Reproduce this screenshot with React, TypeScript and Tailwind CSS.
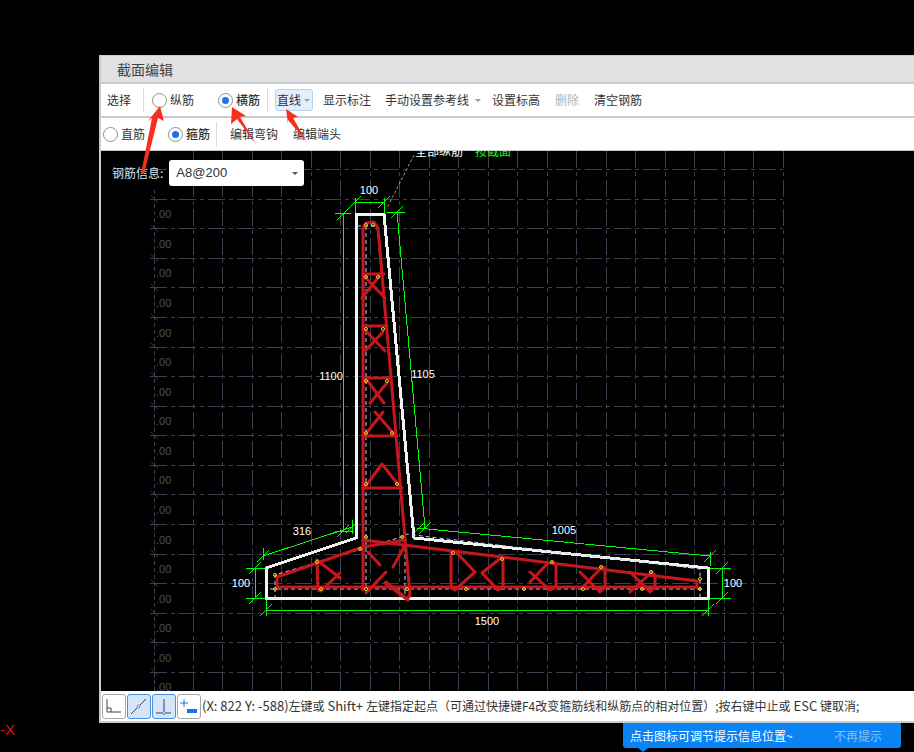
import React from 'react';

const FONT = "font-['Microsoft_YaHei','Noto_Sans_CJK_SC','Noto_Sans',sans-serif]";

// 网格线
const gridX = Array.from({ length: 21 }, (_, i) => 193 + i * 29.5);
const gridY = Array.from({ length: 18 }, (_, i) => 169.7 + i * 29.57);

// 钢筋线
const rebar: string[] = [
  '363,590 363,228 366,223 374,222 378,228 406,550 410,595 407,599 386,582',
  '363,274 384,274', '363,326 387,326', '363,378 390,378', '363,436 397,436', '363,488 402,488',
  '363,275 385,298', '362,298 380,275', '365,330 385,351', '365,351 383,332',
  '367,380 384,403', '370,403 387,383', '365,435 383,412', '375,412 395,435',
  '365,487 382,464 400,487',
  '277,587 277,577 363,547 405,540', '363,540 697,581 697,587 277,587',
  '317,560 318,590 321,591 340,573', '317,560 340,578',
  '368,552 380,565', '367,592 386,572', '393,567 405,545', '385,583 408,600',
  '451,553 451,588 455,590 475,572 457,553',
  '503,557 503,587 498,590 482,573 502,557', '475,572 455,590',
  '530,582 548,563', '530,572 550,590 556,587 556,565 552,562',
  '580,572 600,592 605,587 605,568 601,567', '582,588 602,567',
  '630,572 650,592 655,587 655,575 651,572', '630,592 652,572',
];

// 纵筋点
const dots: [number, number][] = [
  [366, 225], [373, 225], [366, 277], [378, 277], [366, 329], [383, 329], [366, 381], [387, 381],
  [366, 433], [392, 433], [366, 484], [397, 484], [366, 537], [402, 537], [360, 549],
  [275, 575], [275, 589], [317, 562], [321, 589], [366, 589], [407, 589], [453, 553], [466, 589],
  [502, 559], [524, 589], [552, 562], [583, 589], [601, 567], [642, 589], [651, 572], [700, 579], [700, 589],
];

// 标注线
const dims: string[] = [
  '355,202 384,202', '355,198 355,213', '384,198 384,213',
  '335,213 351,213', '343.5,213 343.5,531', '335,531 354,531',
  '387,212 405,212', '397,212 425,528', '417,528 710,556',
  '263,556 352,527', '255,568 255,598', '246,568 266,568', '246,598 266,598',
  '266,610 708,610', '266,598 266,616', '708,598 708,616',
  '722,568 722,598', '710,568 731,568', '710,598 731,598', '710,552 710,566',
  '263,548 263,560', '352,520 352,534',
];
const ticks: [number, number][] = [
  [355, 202], [384, 202], [343, 214], [397, 212], [343, 531], [425, 528], [263, 556], [352, 527],
  [255, 568], [255, 598], [266, 610], [708, 610], [722, 568], [722, 598], [710, 556], [418, 529],
];

const Radio = ({ checked, label }: { checked?: boolean; label: string }) => (
  <span className="flex items-center gap-[3px]">
    <span className="flex h-[15px] w-[15px] items-center justify-center rounded-full border border-[#8f8f8f] bg-white">
      {checked && <span className="h-[7px] w-[7px] rounded-full bg-[#1a73e8]"></span>}
    </span>
    <span className={checked ? 'font-medium' : ''}>{label}</span>
  </span>
);

const Caret = ({ dark }: { dark?: boolean }) => (
  <span className={`block h-0 w-0 border-x-[3px] border-t-[3px] border-x-transparent ${dark ? 'border-t-[#555]' : 'border-t-[#9a9a9a]'}`}></span>
);

const Sep = () => <span className="block h-[24px] w-px bg-[#dcdcdc]"></span>;

const IconButton = ({ active, children }: { active?: boolean; children: React.ReactNode }) => (
  <span className={`flex h-[25px] w-[24px] shrink-0 items-center justify-center rounded-[3px] border ${active ? 'border-[#4a90e2] bg-[#d5e5fa]' : 'border-[#a8a8a8] bg-white'}`}>
    <svg width="22" height="23" viewBox="0 0 22 23" fill="none" stroke="#3c4450" strokeWidth="1">
      {children}
    </svg>
  </span>
);

const Drawing = () => (
  <svg className="block h-[540px] w-full" viewBox="101 151 813 540" preserveAspectRatio="xMinYMin slice">
    {/* 网格 */}
    <g stroke="#3a4150" strokeWidth="1" shapeRendering="crispEdges">
      {gridX.map(x => <line key={x} x1={x} y1="151" x2={x} y2="691" strokeDasharray="17 4 4 4" />)}
      {gridY.map(y => <line key={y} x1="150" y1={y} x2="783" y2={y} strokeDasharray="17 4 4 4" />)}
      <line x1="154.5" y1="190" x2="154.5" y2="691" strokeDasharray="4 3" />
    </g>
    <g stroke="#3a4150" strokeWidth="1">
      {gridY.slice(1).map(y => <line key={y} x1="151" y1={y - 4} x2="158" y2={y + 3} />)}
    </g>
    <g fill="#4b5262" fontSize="11" fontFamily="'Liberation Sans',sans-serif">
      {gridY.slice(1).map(y => <text key={y} x="156" y={y + 19}>.00</text>)}
    </g>

    {/* 引出线 */}
    <line x1="414" y1="155" x2="387" y2="208" stroke="#9a9a9a" strokeDasharray="3 2" />
    <text x="415" y="156" fill="#fff" fontSize="12" fontFamily="'Noto Sans CJK SC',sans-serif">全部纵筋</text>
    <text x="475" y="156" fill="#00ff00" fontSize="12" fontFamily="'Noto Sans CJK SC',sans-serif">按截面</text>

    {/* 标注 */}
    <g stroke="#00ff00" strokeWidth="1" fill="none" shapeRendering="crispEdges">
      {dims.map(p => <polyline key={p} points={p} />)}
      {ticks.map(([x, y]) => <line key={`${x}-${y}`} x1={x - 6} y1={y + 6} x2={x + 6} y2={y - 6} />)}
    </g>

    {/* 截面轮廓 */}
    <polygon
      points="356,214 384,214 414,538 708,568 708,598 266,598 266,568 356,538"
      fill="none"
      stroke="#f2f2f2"
      strokeWidth="3"
      strokeLinejoin="miter"
      shapeRendering="crispEdges"
    />

    {/* 保护层虚线 */}
    <g fill="none" stroke="#b5d6f5" strokeWidth="1" strokeDasharray="4 3">
      <polyline points="357,226 377,226 405,534 700,569 700,598" />
      <polyline points="366,226 366,600" />
      <polyline points="405,534 405,599" />
      <polyline points="275,599 275,575 405,536" />
      <polyline points="270,589 704,589" />
    </g>

    {/* 钢筋 */}
    <g fill="none" stroke="#c8161d" strokeWidth="3" strokeLinecap="round" strokeLinejoin="round">
      {rebar.map(p => <polyline key={p} points={p} />)}
    </g>

    <g fill="none" stroke="#f0d020" strokeWidth="1">
      {dots.map(([x, y]) => <circle key={`${x}-${y}`} cx={x} cy={y} r="1.5" />)}
    </g>

    {/* 标注文字 */}
    <g fill="#fff" fontSize="11" textAnchor="middle" fontFamily="'Liberation Sans',sans-serif">
      <text x="369" y="194">100</text>
      <text x="331" y="380">1100</text>
      <text x="423" y="378">1105</text>
      <text x="302" y="535">316</text>
      <text x="564" y="534">1005</text>
      <text x="241" y="587">100</text>
      <text x="733" y="587">100</text>
      <text x="487" y="625">1500</text>
    </g>
  </svg>
);

export default function App() {
  return (
    <div className={`relative flex h-[752px] w-[914px] flex-col overflow-hidden bg-black pl-[99px] pt-[55px] text-[12px] text-[#333] ${FONT}`}>
      <div className="flex h-[668px] flex-col border-b-2 border-l-2 border-t border-[#c9cccf] bg-white">
        {/* 标题 */}
        <div className="flex h-[28px] shrink-0 items-center border-b-2 border-[#c8ccd0] bg-[#e1e1e1] pl-[16px] text-[14px] text-[#444]">
          截面编辑
        </div>

        {/* 工具栏一 */}
        <div className="flex h-[34px] shrink-0 items-center border-b-2 border-[#c8ccd0] pl-[6px]">
          <span>选择</span>
          <span className="ml-[12px]"><Sep /></span>
          <span className="ml-[8px]"><Radio label="纵筋" /></span>
          <span className="ml-[24px]"><Radio checked label="横筋" /></span>
          <span className="ml-[7px]"><Sep /></span>
          <span className="ml-[7px] flex h-[22px] w-[38px] items-center gap-[3px] rounded-[3px] border border-[#b8d4ee] bg-[#e3effb] pl-[1px]">
            直线
            <Caret />
          </span>
          <span className="ml-[10px]">显示标注</span>
          <span className="ml-[14px]">手动设置参考线</span>
          <span className="ml-[6px]"><Caret /></span>
          <span className="ml-[11px]">设置标高</span>
          <span className="ml-[15px] text-[#b5b5b5]">删除</span>
          <span className="ml-[15px]">清空钢筋</span>
        </div>

        {/* 工具栏二 */}
        <div className="flex h-[33px] shrink-0 items-center border-b border-[#c8ccd0] pl-[2px]">
          <Radio label="直筋" />
          <span className="ml-[23px]"><Radio checked label="箍筋" /></span>
          <span className="ml-[6px]"><Sep /></span>
          <span className="ml-[13px]">编辑弯钩</span>
          <span className="ml-[15px]">编辑端头</span>
        </div>

        {/* 画布 */}
        <div className="relative h-[540px] shrink-0 bg-black">
          <Drawing />
          <div className="absolute left-[11px] top-[9px] flex items-center gap-[6px]">
            <span className="text-[#d6e4f0]">钢筋信息:</span>
            <span className="flex h-[26px] w-[135px] items-center justify-between rounded-[3px] bg-white pl-[7px] pr-[6px] font-['Liberation_Sans',sans-serif] text-[13px]">
              A8@200
              <Caret dark />
            </span>
          </div>
        </div>

        {/* 状态栏 */}
        <div className="flex h-[30px] shrink-0 items-center gap-px whitespace-nowrap bg-white pl-[1px]">
          <IconButton>
            <path d="M4 4v13h14M4 13h4v4" />
          </IconButton>
          <IconButton active>
            <path d="M3 19L18 4" />
            <circle cx="10.5" cy="11.5" r="1.5" fill="#d5e5fa" stroke="#4a90e2" />
          </IconButton>
          <IconButton active>
            <path d="M11 4v14M3 18h15" />
            <circle cx="11" cy="18" r="1.5" fill="#d5e5fa" stroke="#4a90e2" />
          </IconButton>
          <IconButton>
            <path d="M2 8h8M6 4v8" stroke="#1a73e8" />
            <rect x="9" y="14" width="10" height="4" fill="#1a73e8" stroke="none" />
          </IconButton>
          <span className="text-[12px]">
            <span className="text-[13px]">(X: 822 Y: -588)</span>左键或<span className="text-[13px]"> Shift+ </span>左键指定起点（可通过快捷键F4改变箍筋线和纵筋点的相对位置）;按右键中止或<span className="text-[13px]"> ESC </span>键取消;
          </span>
        </div>
      </div>

      {/* 红色箭头 */}
      <svg className="absolute left-0 top-0 h-[752px] w-[914px]" viewBox="0 0 914 752" fill="#f5301e">
        <polygon points="160,106 164,121 158,118 144,174 141,174 152,118 148,121" />
        <polygon points="232,107 246,116 240,117 256,144 237,119 231,124" />
        <polygon points="286,109 298,117 293,118 307,142 288,120 288,124" />
      </svg>

      <span className="absolute left-0 top-[719px] font-['Liberation_Sans',sans-serif] text-[15px] text-[#e01010]">-X</span>

      {/* 提示 */}
      <div className="absolute left-[623px] top-[723px] flex h-[25px] w-[278px] items-center justify-between rounded-b-[3px] bg-[#0a84f5] pl-[7px] pr-[19px] text-white">
        <span>点击图标可调节提示信息位置~</span>
        <span className="text-white/50">不再提示</span>
        <span className="absolute left-[15px] top-full h-0 w-0 border-x-[5px] border-t-[4px] border-x-transparent border-t-[#0a84f5]"></span>
      </div>
    </div>
  );
}
